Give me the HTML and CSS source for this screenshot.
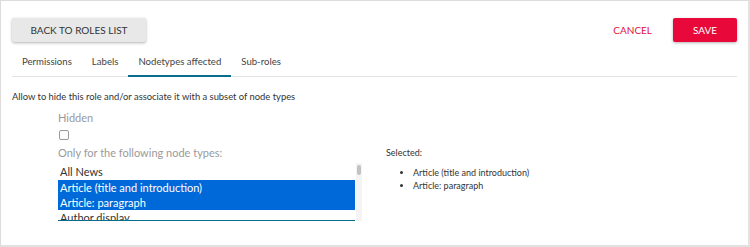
FILE: index.html
```html
<!DOCTYPE html>
<html>
<head>
<meta charset="utf-8">
<link rel="stylesheet" href="styles.css">
</head>
<body>
<div class="panel">
  <div class="header">
    <button class="btn btn-back">BACK TO ROLES LIST</button>
    <div class="actions">
      <button class="btn-cancel">CANCEL</button>
      <button class="btn btn-save">SAVE</button>
    </div>
  </div>
  <div class="tabs">
    <div class="tab">Permissions</div>
    <div class="tab">Labels</div>
    <div class="tab active">Nodetypes affected</div>
    <div class="tab">Sub-roles</div>
  </div>
  <p class="desc">Allow to hide this role and/or associate it with a subset of node types</p>
  <div class="form">
    <div class="left">
      <div class="label">Hidden</div>
      <div class="checkbox"></div>
      <div class="label">Only for the following node types:</div>
      <div class="select">
        <div class="options">
          <div class="opt">All News</div>
          <div class="opt sel">Article (title and introduction)</div>
          <div class="opt sel">Article: paragraph</div>
          <div class="opt">Author display</div>
        </div>
        <div class="scroll"><div class="thumb"></div></div>
      </div>
    </div>
    <div class="right">
      <div class="sel-title">Selected:</div>
      <ul class="sel-list">
        <li>Article (title and introduction)</li>
        <li>Article: paragraph</li>
      </ul>
    </div>
  </div>
</div>
</body>
</html>
```
FILE: styles.css
```css
* { box-sizing: border-box; }
body { margin: 0; background: #fff; font-family: Lato, "Noto Sans", sans-serif; color: #333; }
.panel {
  width: 750px; height: 247px;
  border: 1px solid #dcdcdc;
  border-right: 2px solid #e2e2e2;
  border-bottom: 2px solid #e2e2e2;
  padding: 17px 11px 0 10px;
}
.header { display: flex; justify-content: space-between; align-items: center; }
.btn {
  border: none; height: 24px; font-family: inherit; font-size: 10px; letter-spacing: 0;
  border-radius: 2px; box-shadow: 0 1px 3px rgba(0,0,0,0.3);
}
.btn-back { width: 134px; margin-left: 1px; background: #e8e8e8; color: #333; }
.actions { display: flex; align-items: center; gap: 21px; }
.btn-cancel { background: none; border: none; color: #e0103f; font-family: inherit; font-size: 10px; padding: 0; }
.btn-save { width: 64px; background: #e8093a; color: #fff; }
.tabs { display: flex; margin-top: 6px; border-bottom: 1px solid #e4e4e4; margin-left: 1px; }
.tab { font-size: 9.6px; color: #444; padding: 7px 10px 6px; line-height: 14px; border-bottom: 2px solid transparent; margin-bottom: -1px; }
.tab.active { border-bottom-color: #0b6d8e; }
.desc { margin: 13px 0 0 1px; font-size: 9.4px; line-height: 14px; color: #333; }
.form { display: flex; padding-left: 47px; margin-top: 6px; }
.left { width: 328px; }
.label { font-size: 11px; line-height: 15px; color: #9a9a9a; }
.checkbox { width: 10px; height: 10px; border: 1px solid #9a9a9a; border-radius: 2px; margin: 5px 0 5px 1px; }
.select { display: flex; margin-top: 3px; }
.options { width: 297px; height: 58px; overflow: hidden; border-bottom: 1px solid #0b6d8e; }
.opt { font-size: 11px; line-height: 15px; padding-left: 2px; color: #333; white-space: nowrap; }
.opt:first-child { padding-top: 1px; line-height: 16px; }
.opt.sel { background: #0069d9; color: #fff; }
.scroll { width: 6px; height: 58px; margin-left: 1px; background: #f4f4f4; padding: 2px 1px; }
.thumb { width: 4px; height: 10px; background: #c2c2c2; border-radius: 2px; }
.right { padding-top: 37px; }
.sel-title { font-size: 9px; line-height: 12px; color: #333; }
.sel-list { margin: 7px 0 0; padding-left: 27px; font-size: 9px; line-height: 13px; color: #333; }
```
